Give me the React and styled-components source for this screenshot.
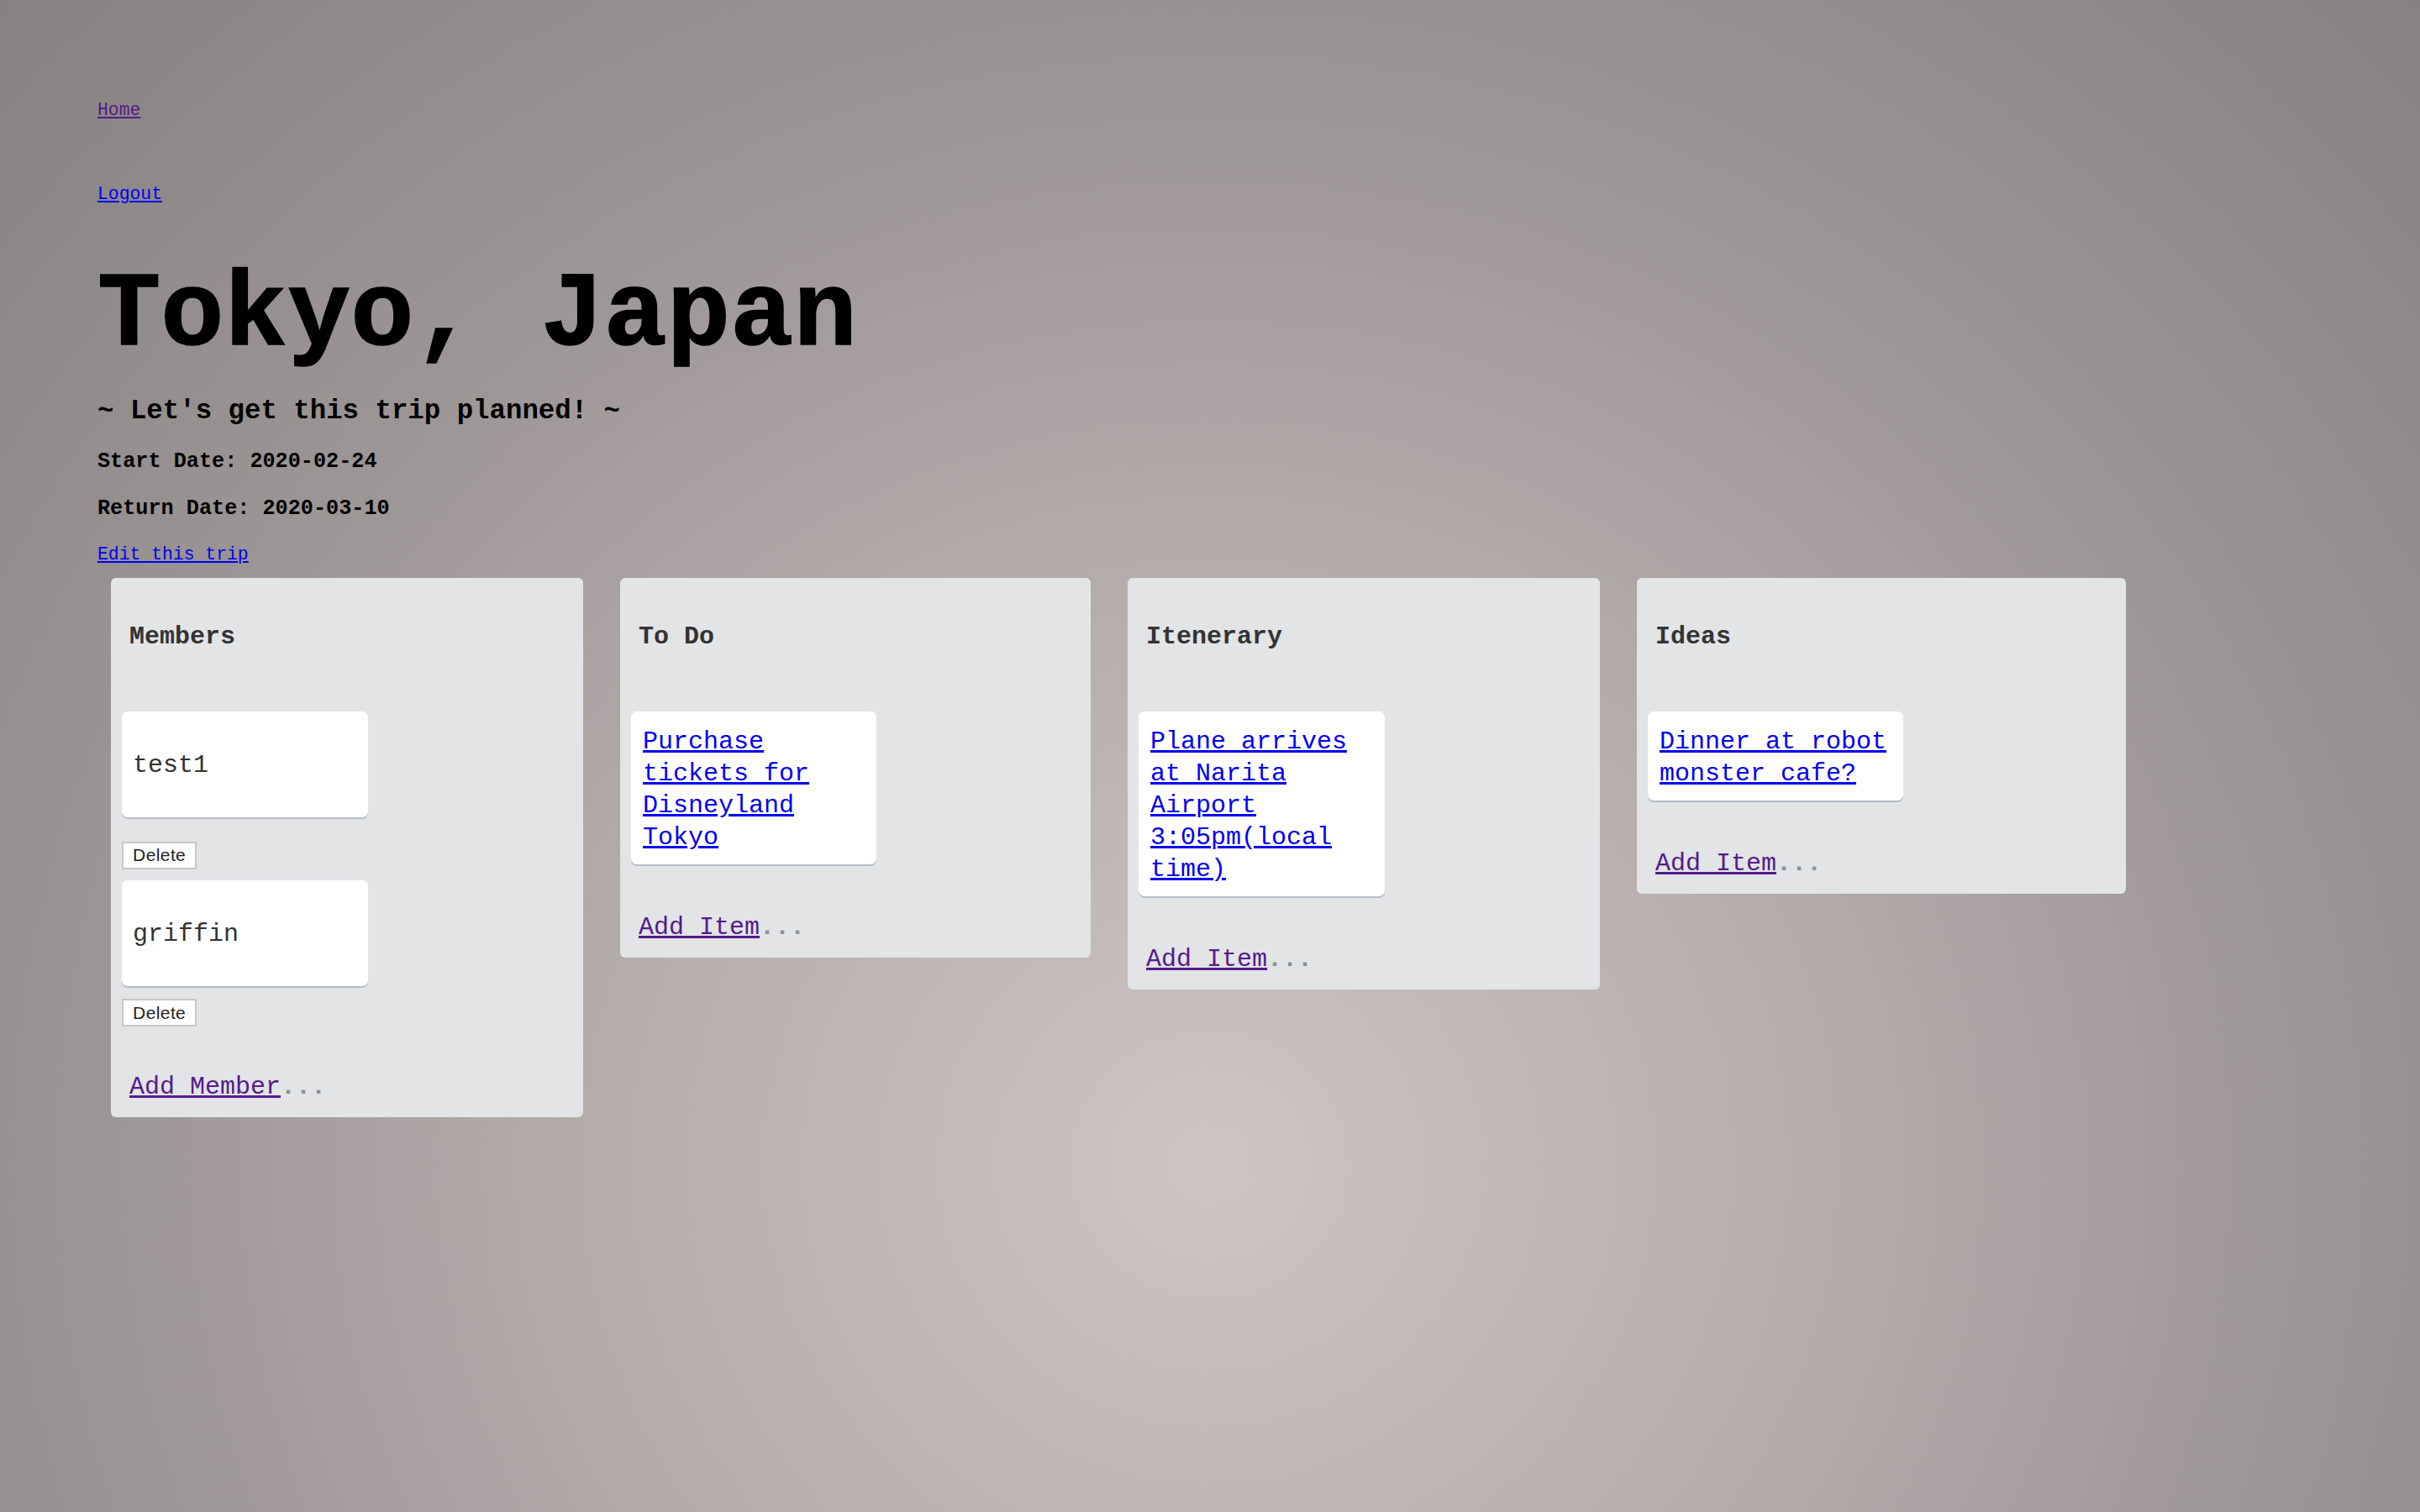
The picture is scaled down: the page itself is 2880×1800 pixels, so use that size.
import React from 'react';
import styled, { createGlobalStyle } from 'styled-components';

const GlobalStyle = createGlobalStyle`
  html, body {
    margin: 0;
    padding: 0;
  }
  body {
    font-family: 'Liberation Mono', 'Courier New', monospace;
  }
`;

const columns = [
  {
    title: 'To Do',
    width: 560,
    items: ['Purchase tickets for Disneyland Tokyo'],
  },
  {
    title: 'Itenerary',
    width: 562,
    items: ['Plane arrives at Narita Airport 3:05pm(local time)'],
  },
  {
    title: 'Ideas',
    width: 582,
    items: ['Dinner at robot monster cafe?'],
  },
];

const members = [
  { name: 'test1', gap: 28.7 },
  { name: 'griffin', gap: 15.7 },
];

const TripPage = () => {
  return (
    <React.Fragment>
      <GlobalStyle />
      <Page>
        <Nav>
          <NavLink href="#" $visited>
            Home
          </NavLink>
          <NavLink href="#">Logout</NavLink>
        </Nav>
        <Header>
          <Title>Tokyo, Japan</Title>
          <Tagline>~ Let's get this trip planned! ~</Tagline>
          <DateLine>Start Date: 2020-02-24</DateLine>
          <DateLine>Return Date: 2020-03-10</DateLine>
          <EditLink href="#">Edit this trip</EditLink>
        </Header>
        <Board>
          <Column $width={562}>
            <ColumnTitle>Members</ColumnTitle>
            {members.map((m, i) => (
              <div key={m.name}>
                <MemberCard $first={i === 0}>
                  <p>{m.name}</p>
                </MemberCard>
                <DeleteButton type="button" $gap={m.gap}>
                  Delete
                </DeleteButton>
              </div>
            ))}
            <AddRow $top={55}>
              <a href="#">Add Member</a>
              <span>...</span>
            </AddRow>
          </Column>
          {columns.map((col) => (
            <Column key={col.title} $width={col.width}>
              <ColumnTitle>{col.title}</ColumnTitle>
              {col.items.map((item) => (
                <ItemCard key={item}>
                  <a href="#">{item}</a>
                </ItemCard>
              ))}
              <AddRow $top={57.5}>
                <a href="#">Add Item</a>
                <span>...</span>
              </AddRow>
            </Column>
          ))}
        </Board>
      </Page>
    </React.Fragment>
  );
};

const Page = styled.main`
  min-height: 100vh;
  box-sizing: border-box;
  padding: 118px 0 40px 116px;
  background: radial-gradient(
    ellipse farthest-corner at 50% 77%,
    #cec4c4 0%,
    #b8aeae 33%,
    #9d9696 64%,
    #868282 100%
  );
  color: #000;
`;

const Nav = styled.nav`
  display: flex;
  flex-direction: column;
  align-items: flex-start;
  gap: 74px;
`;

const NavLink = styled.a`
  font-size: 21.4px;
  line-height: 26px;
  color: ${(p) => (p.$visited ? '#551a8b' : '#0000ee')};
  text-decoration: underline;
`;

const Header = styled.header`
  display: flex;
  flex-direction: column;
  align-items: flex-start;
`;

const Title = styled.h1`
  margin: 61px 0 0;
  font-size: 125.5px;
  line-height: 145px;
  font-weight: 700;
  white-space: pre;
  -webkit-text-stroke: 1.5px #000;
`;

const Tagline = styled.h4`
  margin: 22px 0 0;
  font-size: 32.4px;
  line-height: 36px;
  font-weight: 700;
`;

const DateLine = styled.h5`
  margin: 27px 0 0;
  font-size: 25.2px;
  line-height: 30px;
  font-weight: 700;
  & + & {
    margin-top: 26px;
  }
`;

const EditLink = styled.a`
  margin-top: 26.4px;
  font-size: 21.4px;
  line-height: 26px;
  color: #0000ee;
  text-decoration: underline;
`;

const Board = styled.section`
  display: flex;
  align-items: flex-start;
  gap: 44px;
  margin-top: 15px;
  padding-left: 16px;
`;

const Column = styled.div`
  width: ${(p) => p.$width}px;
  box-sizing: border-box;
  padding: 13px 13px 19px;
  background: #e2e4e6;
  border-radius: 6px;
`;

const ColumnTitle = styled.h3`
  margin: 40px 0 72px 9px;
  font-size: 30px;
  line-height: 34px;
  font-weight: 700;
  color: #333;
`;

const Card = styled.div`
  width: 54.7%;
  box-sizing: border-box;
  background: #fff;
  border-radius: 7px;
  box-shadow: 0 2px 0 rgba(9, 30, 66, 0.2);
`;

const ItemCard = styled(Card)`
  padding: 17px 13px 13px 14px;
  font-size: 30px;
  line-height: 38px;
  a {
    color: #0000ee;
    text-decoration: underline;
  }
`;

const MemberCard = styled(Card)`
  margin-top: ${(p) => (p.$first ? 0 : 13)}px;
  padding: 15px 13px 13px;
  font-size: 30px;
  line-height: 38px;
  color: #333;
  p {
    margin: 30px 0;
  }
`;

const DeleteButton = styled.button`
  display: block;
  margin-top: ${(p) => p.$gap}px;
  width: 89.3px;
  height: 32.6px;
  box-sizing: border-box;
  padding: 0;
  background: #fff;
  border: 2px solid #c6c6c6;
  font-family: 'Liberation Sans', Arial, sans-serif;
  font-size: 21px;
  letter-spacing: 0.4px;
  color: #222;
`;

const AddRow = styled.div`
  margin: ${(p) => p.$top}px 0 0 9px;
  font-size: 30px;
  line-height: 34px;
  a {
    color: #551a8b;
    text-decoration: underline;
  }
  span {
    color: #899096;
    font-weight: 700;
  }
`;

export default TripPage;
